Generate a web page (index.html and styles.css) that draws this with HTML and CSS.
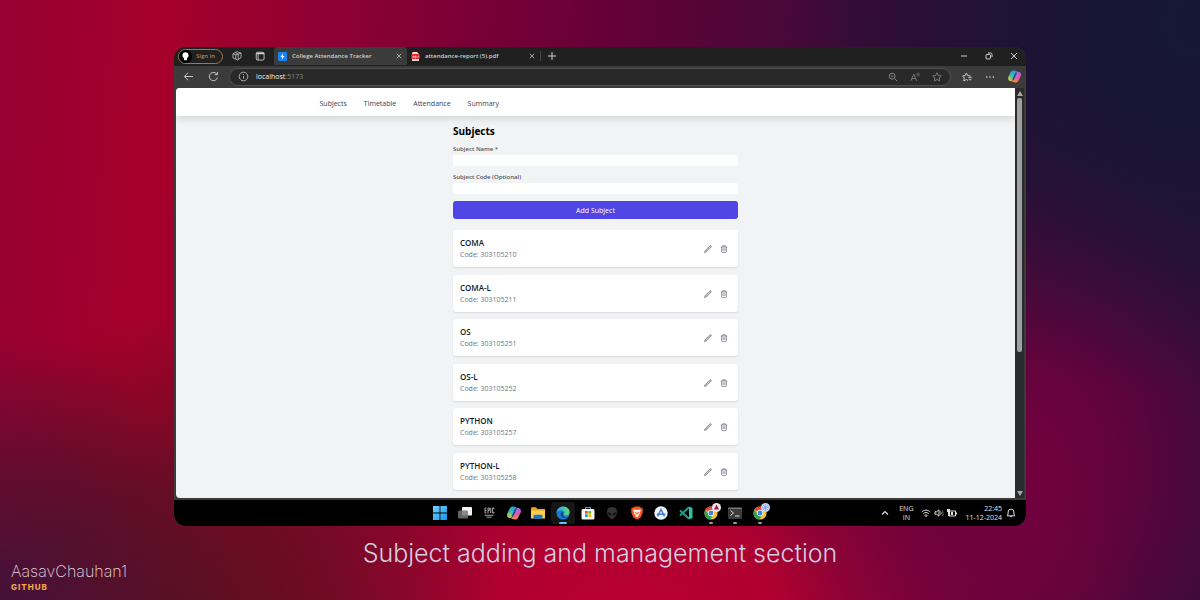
FILE: index.html
```html
<!DOCTYPE html>
<html lang="en">
<head>
<meta charset="utf-8">
<meta name="viewport" content="width=device-width, initial-scale=1">
<title>College Attendance Tracker</title>
<link rel="stylesheet" href="styles.css">
</head>
<body class="stage">
<svg class="defs" width="0" height="0" aria-hidden="true">
  <defs>
    <linearGradient id="gCopA" x1="0" y1="0" x2="0" y2="1"><stop offset="0" stop-color="#1a9fe8"/><stop offset=".5" stop-color="#3cc0a0"/><stop offset="1" stop-color="#f7c52c"/></linearGradient>
    <linearGradient id="gCopB" x1="0" y1="0" x2="0" y2="1"><stop offset="0" stop-color="#9a6cf5"/><stop offset=".5" stop-color="#e5569c"/><stop offset="1" stop-color="#f58a3c"/></linearGradient>
    <linearGradient id="gEdge" x1="0" y1="0" x2="1" y2="0"><stop offset="0" stop-color="#2aa6e8"/><stop offset="1" stop-color="#5fdc72"/></linearGradient>
    <linearGradient id="gWin" x1="0" y1="0" x2="1" y2="1"><stop offset="0" stop-color="#6fd6ff"/><stop offset="1" stop-color="#1b94ea"/></linearGradient>
    <symbol id="copilot" viewBox="0 0 16 16"><g transform="rotate(14 8 8)"><path d="M5.500 1h4L7 12.500c-.4 1.700-1.200 2.300-2.500 2.300C2 14.800.5 13 .7 10.500L1.800 5C2.300 2.300 3.300 1 5.500 1Z" fill="url(#gCopA)"/><path d="M10.500 15h-4L9 3.500c.4-1.700 1.200-2.300 2.500-2.300 2.500 0 4 1.800 3.800 4.300L14.200 11c-.5 2.700-1.500 4-3.700 4Z" fill="url(#gCopB)"/><path d="M9 3 7 12.500" stroke="#124fa8" stroke-width="2"/></g></symbol>
    <symbol id="chrome" viewBox="0 0 16 16"><circle cx="8" cy="8" r="7.500" fill="#f7c52c"/><path d="M8 8 1.500 4.300A7.500 7.500 0 0 1 14.500 4.300L14.500 5H8Z" fill="#e24437"/><path d="M1.500 4.300A7.500 7.500 0 0 0 7.600 15.500L10.500 9.500 8 8 5.200 9.300Z" fill="#2fa152"/><circle cx="8" cy="8" r="3.600" fill="#fff"/><circle cx="8" cy="8" r="2.800" fill="#3f7fe8"/></symbol>
    <symbol id="star" viewBox="0 0 16 16"><path d="m8 1.200 2.100 4.400 4.800.6-3.500 3.300.9 4.800L8 12l-4.300 2.300.9-4.800L1.100 6.200l4.800-.6Z" fill="none" stroke="currentColor" stroke-width="1.400" stroke-linejoin="round"/></symbol>
    <symbol id="pencil" viewBox="0 0 16 16"><path d="m1 15 1-3.400L12 1.600a1.200 1.200 0 0 1 1.700 0l.7.700a1.200 1.200 0 0 1 0 1.700L4.400 14Z" fill="#c3c7cd" stroke="currentColor" stroke-width="1.400" stroke-linejoin="round"/></symbol>
    <symbol id="trash" viewBox="0 0 16 16"><path d="M1.500 4h13M5.500 4V1.500h5V4M3.200 4v9.500c0 .8.500 1.300 1.200 1.300h7.200c.7 0 1.200-.5 1.200-1.300V4M6.300 6.500v5.500M9.700 6.500v5.500" fill="none" stroke="currentColor" stroke-width="1.500"/></symbol>
    <symbol id="close" viewBox="0 0 8 8"><path d="m1 1 6 6m0-6L1 7" stroke="currentColor"/></symbol>
  </defs>
</svg>

<section class="window" aria-label="Browser window">
  <header class="tabbar">
    <button class="signin"><svg viewBox="0 0 14 14"><circle cx="7" cy="7" r="7" fill="#000"/><path d="M7 2.500c2 0 3.300 1.300 3.300 3.200 0 1.500-.8 2.200-1.500 2.900L8.400 11H5.600l-.4-2.400c-.7-.7-1.500-1.400-1.500-2.900C3.700 3.800 5 2.500 7 2.500Z" fill="#fff"/></svg>Sign in</button>
    <button class="icon-btn" aria-label="Workspaces"><svg viewBox="0 0 16 16" fill="none" stroke="currentColor" stroke-width="1.200"><path d="M5 2.500 8.500 1 14.500 3.500v7L9 14.500 1.500 11V4.500ZM1.500 4.500 6 6.300v7M5 2.500l5 2.500v9M10 5l4.500-1.500M6 6.300 10 5"/></svg></button>
    <button class="icon-btn" aria-label="Tab actions"><svg viewBox="0 0 16 16" fill="none" stroke="currentColor" stroke-width="1.400"><rect x="2" y="2" width="12.500" height="12.500" rx="2"/><path d="M2 4h12.500" stroke-width="2.500"/><path d="M5 5v9.500"/></svg></button>
    <div class="tab tab-active">
      <svg class="favicon" viewBox="0 0 9 9"><rect width="9" height="9" rx="1" fill="#1583f5"/><path d="M5.200 1.200 2.400 5h1.900l-.6 2.800L6.600 4H4.700Z" fill="#fff"/></svg>
      <span class="tab-title">College Attendance Tracker</span>
      <button class="close" aria-label="Close tab"><svg><use href="#close"/></svg></button>
    </div>
    <div class="tab">
      <svg class="favicon" viewBox="0 0 9 9"><path d="M2 0h4l2 2v7H1V1Z" fill="#f4d9d9"/><rect y="2" width="9" height="5" rx="2" fill="#e3242b"/><path d="M2 6V4h1v1H2m2-1v2h1V4Zm3 2V4h1" fill="none" stroke="#fff" stroke-width=".5"/></svg>
      <span class="tab-title">attendance-report (5).pdf</span>
      <button class="close" aria-label="Close tab"><svg><use href="#close"/></svg></button>
    </div>
    <button class="new-tab" aria-label="New tab"><svg viewBox="0 0 10 10"><path d="M5 1v8M1 5h8" stroke="currentColor"/></svg></button>
    <div class="controls">
      <button aria-label="Minimize"><svg viewBox="0 0 8 8"><path d="M1 4h6" stroke="currentColor"/></svg></button>
      <button aria-label="Restore"><svg viewBox="0 0 8 8" fill="none" stroke="currentColor"><rect x="1" y="2.500" width="4.500" height="4.500" rx="1"/><path d="M3 1h2.500C6.500 1 7 1.500 7 2.500V5"/></svg></button>
      <button aria-label="Close"><svg><use href="#close"/></svg></button>
    </div>
  </header>

  <div class="toolbar">
    <button class="tool" aria-label="Back"><svg viewBox="0 0 12 12" fill="none" stroke="currentColor"><path d="M11 6H1.500M5.500 2l-4 4 4 4"/></svg></button>
    <button class="tool" aria-label="Refresh"><svg viewBox="0 0 12 12" fill="none" stroke="currentColor"><path d="M10.300 7.200A4.500 4.500 0 1 1 9.800 3.700M10.300 1v3H7.300"/></svg></button>
    <div class="address">
      <svg class="info" viewBox="0 0 12 12" fill="none" stroke="currentColor"><circle cx="6" cy="6" r="4.700"/><path d="M6 5.300v3M6 3.300v1"/></svg>
      <span class="url"><b>localhost</b>:5173</span>
      <button class="small" aria-label="Zoom"><svg viewBox="0 0 12 12" fill="none" stroke="currentColor" stroke-width="1.200"><circle cx="5" cy="5" r="3.500"/><path d="M7.700 7.700 11 11M3.500 5h3"/></svg></button>
      <button class="small" aria-label="Read aloud"><svg viewBox="0 0 12 12" fill="none" stroke="currentColor"><path d="m1 10.500 3.500-8 3.500 8M2.300 8h4.500M8 1.500c1 .7 1 2.300 0 3M9.700.7c1.400 1.300 1.400 3.400 0 4.700"/></svg></button>
      <button class="small" aria-label="Add to favorites"><svg><use href="#star"/></svg></button>
    </div>
    <div class="tools-end">
      <button class="small" aria-label="Favorites"><svg viewBox="0 0 16 16" fill="none" stroke="currentColor" stroke-width="1.500"><path d="M9.500 13.500 7 12l-4.200 2.300.9-4.700L.8 6.300l4.300-.6L7 1.500l2 4.200 5 .6M10 9h5.500M11 12.300h4"/></svg></button>
      <button class="small" aria-label="Settings"><svg viewBox="0 0 12 12" fill="currentColor"><circle cx="2" cy="6" r="1"/><circle cx="6" cy="6" r="1"/><circle cx="10" cy="6" r="1"/></svg></button>
      <button class="copilot" aria-label="Copilot"><svg><use href="#copilot"/></svg></button>
    </div>
  </div>

  <div class="viewport">
    <div class="page">
      <nav class="nav"><div class="nav-inner"><a href="#subjects">Subjects</a><a href="#timetable">Timetable</a><a href="#attendance">Attendance</a><a href="#summary">Summary</a></div></nav>
      <main class="content" id="subjects">
        <h1>Subjects</h1>
        <form class="form">
          <div class="field"><label for="name">Subject Name *</label><input id="name" type="text"></div>
          <div class="field"><label for="code">Subject Code (Optional)</label><input id="code" type="text"></div>
          <button class="add" type="button">Add Subject</button>
        </form>
        <ul class="list">
          <li class="card"><div><h2>COMA</h2><p>Code: 303105210</p></div><button aria-label="Edit COMA"><svg><use href="#pencil"/></svg></button><button aria-label="Delete COMA"><svg><use href="#trash"/></svg></button></li>
          <li class="card"><div><h2>COMA-L</h2><p>Code: 303105211</p></div><button aria-label="Edit COMA-L"><svg><use href="#pencil"/></svg></button><button aria-label="Delete COMA-L"><svg><use href="#trash"/></svg></button></li>
          <li class="card"><div><h2>OS</h2><p>Code: 303105251</p></div><button aria-label="Edit OS"><svg><use href="#pencil"/></svg></button><button aria-label="Delete OS"><svg><use href="#trash"/></svg></button></li>
          <li class="card"><div><h2>OS-L</h2><p>Code: 303105252</p></div><button aria-label="Edit OS-L"><svg><use href="#pencil"/></svg></button><button aria-label="Delete OS-L"><svg><use href="#trash"/></svg></button></li>
          <li class="card"><div><h2>PYTHON</h2><p>Code: 303105257</p></div><button aria-label="Edit PYTHON"><svg><use href="#pencil"/></svg></button><button aria-label="Delete PYTHON"><svg><use href="#trash"/></svg></button></li>
          <li class="card"><div><h2>PYTHON-L</h2><p>Code: 303105258</p></div><button aria-label="Edit PYTHON-L"><svg><use href="#pencil"/></svg></button><button aria-label="Delete PYTHON-L"><svg><use href="#trash"/></svg></button></li>
        </ul>
      </main>
    </div>
    <div class="scrollbar" aria-hidden="true">
      <svg viewBox="0 0 6 5"><path d="M3 0 6 5H0Z" fill="#a8a8a8"/></svg>
      <div class="track"><div class="thumb"></div></div>
      <svg viewBox="0 0 6 5"><path d="M3 5 6 0H0Z" fill="#a8a8a8"/></svg>
    </div>
  </div>

  <footer class="taskbar">
    <div class="apps">
      <button aria-label="Start"><svg viewBox="0 0 14 14" fill="url(#gWin)"><path d="M0 0h6.600v6.600H0ZM7.400 0H14v6.600H7.400ZM0 7.400h6.600V14H0ZM7.400 7.400H14V14H7.400Z"/></svg></button>
      <button aria-label="Task view"><svg viewBox="0 0 14 14"><rect x="4" y="1" width="10" height="8.500" rx="1" fill="#f2f2f2"/><rect y="4.500" width="10" height="8" rx="1" fill="#777" fill-opacity=".85"/></svg></button>
      <button aria-label="Epic Games"><svg viewBox="0 0 14 14" fill="none" stroke="#b5b5b5"><path d="M4.500 2H3v5h1.500M3 4.500h1.300M6 7.500V2h1.300v2.500H6M8.700 2v5M12 3.200V2h-1.600v5H12V5.800M2.500 9.300h9M4.500 11.200h5" stroke-width=".9"/></svg></button>
      <button aria-label="Copilot"><svg><use href="#copilot"/></svg></button>
      <button aria-label="File Explorer"><svg viewBox="0 0 14 14"><path d="M0 2.500C0 1.500.5 1.200 1.200 1.200h3.600L6.500 3H14v9H0Z" fill="#e9a51c"/><path d="M0 4.500h14v8H0Z" fill="#fcd04e"/><path d="M2.500 12.800V10c0-.8.400-1.200 1.200-1.200h6.600c.8 0 1.200.4 1.200 1.200v2.800Z" fill="#1878cc"/></svg></button>
      <button class="current" aria-label="Edge"><svg viewBox="0 0 16 16"><circle cx="8" cy="8" r="7.500" fill="#167bd0"/><path d="M.6 8C.8 3.800 4 .5 8 .5c4.500 0 7.500 3 7.500 6.300 0 2.500-1.700 4-4 4-1.600 0-2.600-.7-2.600-1.300 0-.5.700-.7.700-1.800 0-1.500-1.500-2.800-3.800-2.800C3.400 4.900 1.500 6.200.6 8Z" fill="url(#gEdge)"/><path d="M5.500 8.500c-.3 3.200 2.500 5.500 5.500 5.200 1.300-.1 2.500-.7 3-1.300-2.500 1.300-6.500.8-6.500-3.400 0-1 .3-1.400.7-1.900-1.400-.3-2.600.4-2.700 1.400Z" fill="#0c3f86"/></svg></button>
      <button aria-label="Store"><svg viewBox="0 0 14 14"><path d="M4.500 3.500v-2h5v2" fill="none" stroke="#4db5ee"/><rect x=".5" y="3" width="13" height="10.500" rx="1.500" fill="#f5f5f5"/><path d="M4 5h2.700v2.700H4Z" fill="#f25022"/><path d="M7.300 5H10v2.700H7.300Z" fill="#7fba00"/><path d="M4 8.300h2.700V11H4Z" fill="#00a4ef"/><path d="M7.300 8.300H10V11H7.300Z" fill="#ffb900"/></svg></button>
      <button aria-label="Alienware"><svg viewBox="0 0 14 14"><path d="M7 1c3.300 0 5 2 5 5 0 3.200-3 6.300-5 7.500C5 12.300 2 9.200 2 6c0-3 1.700-5 5-5Z" fill="#343434"/><path d="M3 6.500c2 0 3 1 3.300 3C4.500 9.500 3.300 8.500 3 6.500Zm8 0c-2 0-3 1-3.300 3 1.800 0 3-1 3.300-3Z" fill="#080808"/></svg></button>
      <button aria-label="Brave"><svg viewBox="0 0 14 14"><path d="M4.500.5h5l1.200 1.200 1.400-.1L13 4l-.5 1 .3 1.200-2 5L7 13.800l-3.800-2.600-2-5L1.500 5 1 4l.9-2.400 1.400.1Z" fill="#fb5424"/><path d="m3 4.200 2-.6 2 .4 2-.4 2 .6-1.300 2.200.2 1.600L8 9l.7 1L7 11.200 5.300 10 6 9 4.100 8l.2-1.600Z" fill="#fff"/><path d="m4.700 5.500 1.500.6L7 8l.8-1.900 1.500-.6-.8 1.700L7 9 5.500 7.200Z" fill="#fb5424"/></svg></button>
      <button aria-label="App Store"><svg viewBox="0 0 14 14"><circle cx="7" cy="7" r="6.700" fill="#f4f8fd"/><path d="m3.500 10.500 3.500-7 3.500 7M2.800 8.300h8.400" fill="none" stroke="#3b7de0" stroke-width="1.500"/></svg></button>
      <button aria-label="Code editor"><svg viewBox="0 0 14 14"><path d="m10 .5 3.500 1.500v10L10 13.500Z" fill="#2cc3a2"/><path d="M10 1.300 1 9.500M10 12.700 1 4.500" stroke="#1ca085" stroke-width="2"/></svg></button>
      <button class="running" aria-label="Chrome"><svg><use href="#chrome"/></svg><svg class="badge" viewBox="0 0 9 9"><circle cx="4.500" cy="4.500" r="4.500" fill="#f1e7ea"/><path d="M4.500 1.500 7 6.500H2Z" fill="#941c3c"/></svg></button>
      <button class="running" aria-label="Terminal"><svg viewBox="0 0 14 14"><rect y="1" width="14" height="12" rx="1" fill="#3c3c3c"/><path d="M0 2.500h14" stroke="#777"/><path d="m2.500 4.500 3 2.500-3 2.500M7 10h4.500" fill="none" stroke="#ddd"/></svg></button>
      <button class="running" aria-label="Chrome, second profile"><svg><use href="#chrome"/></svg><svg class="badge" viewBox="0 0 9 9"><circle cx="4.500" cy="4.500" r="4.500" fill="#c3d3f8"/><path d="M4.500 1v7M1 4.500h7M2 2l5 5m0-5L2 7" stroke="#7d9fee" stroke-width=".7"/></svg></button>
    </div>
    <div class="tray">
      <svg class="chev" viewBox="0 0 8 8"><path d="m1 5.500 3-3 3 3" fill="none" stroke="currentColor" stroke-width="1.200"/></svg>
      <span class="lang">ENG<br>IN</span>
      <div class="status">
        <svg viewBox="0 0 10 10" fill="none" stroke="currentColor"><path d="M.8 4c2.400-2.500 6-2.500 8.400 0M2.300 5.700c1.600-1.600 3.800-1.600 5.400 0M3.800 7.300c.8-.7 1.600-.7 2.400 0L5 8.700Z"/></svg>
        <svg viewBox="0 0 10 10" fill="none" stroke="currentColor"><path d="M1 3.800h1.600L5 1.800v6.400L2.600 6.200H1ZM6.500 3.500c.8.800.8 2.200 0 3"/><path d="M8 2c1.500 1.500 1.500 4.500 0 6" stroke="#666"/></svg>
        <svg viewBox="0 0 10 10"><path d="M2 3h6.500v5H2ZM9.500 4.500v2" fill="none" stroke="currentColor"/><path d="M0 1h3v7H1V4H0Zm4 3h2v3H4Z" fill="currentColor"/></svg>
      </div>
      <time class="clock">22:45<br>11-12-2024</time>
      <svg class="bell" viewBox="0 0 10 10" fill="none" stroke="currentColor"><path d="M1.200 7.800h7.600L7.900 6V4a2.900 2.900 0 0 0-5.800 0v2ZM4 8.200c.3 1 1.700 1 2 0"/></svg>
    </div>
  </footer>
</section>

<footer class="footer">
  <div class="credit"><span class="author">AasavChauhan1</span><a href="#github">GITHUB</a></div>
  <p class="caption">Subject adding and management section</p>
</footer>
</body>
</html>
```
FILE: styles.css
```css
*,
*::before,
*::after {
  box-sizing: border-box;
}

h1, h2, p, ul {
  margin: 0;
  padding: 0;
}

button {
  margin: 0;
  padding: 0;
  border: 0;
  background: none;
  color: inherit;
  font: inherit;
}

a {
  color: inherit;
  text-decoration: none;
}

svg {
  display: block;
  flex: none;
}

.defs {
  position: absolute;
}

.stage {
  margin: 0;
  min-height: 100vh;
  padding-top: 47px;
  display: flex;
  flex-direction: column;
  font-family: "Open Sans", "Noto Sans", sans-serif;
  background:
    radial-gradient(ellipse 34% 62% at 100% 4%, #141833 0%, #161633dd 30%, #1a143400 100%),
    radial-gradient(ellipse 22% 55% at 85% 78%, #74003f 0%, #72003fbb 40%, #74003f00 100%),
    radial-gradient(ellipse 20% 48% at 0% 104%, #40123a 0%, #43123499 45%, #40123a00 100%),
    radial-gradient(ellipse 26% 52% at 16% 104%, #5c101f 0%, #5f0f1fbb 45%, #5c101f00 100%),
    radial-gradient(ellipse 42% 58% at 53% 103%, #b80030 0%, #b60030ee 30%, #b8003000 100%),
    linear-gradient(94deg, #960033 0%, #a6002a 13%, #8c0034 28%, #680038 48%, #3e0a38 68%, #2e0c38 84%, #2c0e38 100%);
}

.window {
  flex: 1;
  width: 71%;
  margin: 0 auto;
  display: flex;
  flex-direction: column;
  overflow: hidden;
  border-radius: 12px;
  background: #3b3b3b;
  color: #d0d0d0;
}

/* Browser chrome */

.tabbar {
  display: flex;
  align-items: center;
  height: 19px;
  padding: 0 8px 1px 4px;
  background: #202020;
  font-size: 6px;
  font-weight: 600;
}

.signin {
  display: flex;
  align-items: center;
  gap: 4px;
  width: 45px;
  height: 15px;
  border: 1px solid #a5744a;
  border-radius: 8px;
  color: #b5835a;
  font-weight: 600;
}

.signin svg {
  width: 13px;
  height: 13px;
}

.icon-btn {
  width: 23px;
  display: grid;
  place-items: center;
}

.icon-btn:nth-child(2) {
  margin-left: 2px;
}

.icon-btn svg {
  width: 10px;
  height: 10px;
}

.tab {
  display: flex;
  align-items: center;
  gap: 5px;
  width: 133px;
  height: 18px;
  padding: 0 5px 0 4px;
}

.tab-active {
  margin-left: 3px;
  background: #3b3b3b;
  border-radius: 4px 4px 0 0;
}

.favicon {
  width: 9px;
  height: 9px;
}

.tab-title {
  flex: 1;
  white-space: nowrap;
}

.close svg {
  width: 6px;
  height: 6px;
}

.new-tab {
  padding-left: 6px;
  border-left: 1px solid #444;
}

.new-tab svg {
  width: 10px;
  height: 10px;
}

.controls {
  display: flex;
  gap: 17px;
  margin-left: auto;
}

.controls svg {
  width: 8px;
  height: 8px;
}

.toolbar {
  display: flex;
  align-items: center;
  height: 22px;
  padding: 0 5px 1px 9px;
}

.tool {
  width: 25px;
}

.tool svg,
.info {
  width: 11px;
  height: 11px;
}

.address {
  flex: 1;
  display: flex;
  align-items: center;
  gap: 12px;
  height: 18px;
  margin-left: -4px;
  padding: 0 8px;
  border: 1px solid #505050;
  border-radius: 9px;
  background: #292929;
  color: #858585;
}

.info {
  margin-right: -5px;
  color: #b5b5b5;
}

.url {
  flex: 1;
  font-size: 7px;
}

.url b {
  color: #f0f0f0;
  font-weight: 500;
}

.small svg {
  width: 10px;
  height: 10px;
}

.tools-end {
  display: flex;
  align-items: center;
  gap: 13px;
  padding-left: 11px;
}

.copilot svg {
  width: 13px;
  height: 13px;
}

/* Page */

.viewport {
  flex: 1;
  display: flex;
  padding: 0 2px 2px;
}

.page {
  flex: 1;
  display: flex;
  flex-direction: column;
  overflow: hidden;
  border-radius: 4px 0 0 4px;
  background: #f2f3f5;
}

.nav {
  background: #fff;
  box-shadow: 0 2px 8px #00000026;
}

.nav-inner {
  display: flex;
  align-items: center;
  gap: 17px;
  width: 100%;
  max-width: 552px;
  height: 28px;
  margin: 0 auto;
  padding-top: 2px;
  font-size: 7px;
  color: #374151;
}

.content {
  flex: 1;
  display: flex;
  flex-direction: column;
  width: 100%;
  max-width: 285px;
  margin: 0 auto;
  padding: 8px 0;
  color: #111827;
}

.content h1 {
  font-size: 10px;
  line-height: 14px;
  color: #000;
}

.form {
  display: flex;
  flex-direction: column;
  gap: 7px;
  margin: 7px 0 11px;
}

.field {
  display: flex;
  flex-direction: column;
  gap: 1px;
}

.field label {
  font-size: 6px;
  line-height: 9px;
  font-weight: 600;
  color: #4b5563;
}

.field input {
  width: 100%;
  height: 11px;
  padding: 0 4px;
  border: 0;
  border-radius: 2px;
  background: #fff;
  font: inherit;
  font-size: 7px;
}

.add {
  height: 18px;
  border-radius: 3px;
  background: #4f46e5;
  color: #fff;
  font-size: 7px;
}

.list {
  flex: 1;
  display: flex;
  flex-direction: column;
  justify-content: space-between;
  gap: 7px;
  list-style: none;
}

.card {
  display: flex;
  align-items: center;
  gap: 8px;
  padding: 7px 10px 6px 7px;
  border-radius: 3px;
  background: #fff;
  box-shadow: 0 1px 2px #0000001a;
}

.card div {
  flex: 1;
}

.card h2 {
  font-size: 8px;
  line-height: 12px;
  font-weight: 600;
}

.card p {
  font-size: 7px;
  line-height: 12px;
  color: #70757f;
}

.card button {
  color: #6b7280;
}

.card button svg {
  width: 8px;
  height: 8px;
}

.scrollbar {
  display: flex;
  flex-direction: column;
  align-items: center;
  gap: 2px;
  width: 9px;
  padding: 3px 0 2px;
  background: #2b2b2b;
}

.scrollbar svg {
  width: 6px;
  height: 5px;
}

.track {
  flex: 1;
}

.thumb {
  width: 5px;
  height: 65%;
  border-radius: 2px;
  background: #a0a0a0;
}

/* Taskbar */

.taskbar {
  display: grid;
  grid-template-columns: 1fr 344px 1fr;
  align-items: center;
  height: 26px;
  background: #000;
  color: #e0e0e0;
}

.apps {
  grid-column: 2;
  display: flex;
  justify-content: space-between;
}

.apps button {
  position: relative;
  display: grid;
  place-items: center;
  width: 24px;
  height: 22px;
  border-radius: 3px;
}

.apps svg {
  width: 14px;
  height: 14px;
}

.apps .current {
  background: #161616;
}

.current::after,
.running::after {
  content: "";
  position: absolute;
  bottom: 0;
  left: 50%;
  width: 4px;
  height: 2px;
  margin-left: -2px;
  border-radius: 1px;
  background: #9a9a9a;
}

.current::after {
  width: 8px;
  margin-left: -4px;
  background: #5cc3f5;
}

.apps .badge {
  position: absolute;
  top: 1px;
  right: 2px;
  width: 9px;
  height: 9px;
}

.tray {
  display: flex;
  align-items: center;
  justify-content: flex-end;
  gap: 4px;
  padding-right: 10px;
  font-size: 7px;
  line-height: 9px;
}

.chev {
  width: 8px;
  height: 8px;
  margin-right: 6px;
}

.lang {
  text-align: center;
}

.status {
  display: flex;
  gap: 3px;
  padding: 0 4px;
}

.status svg {
  width: 10px;
  height: 10px;
}

.bell {
  width: 10px;
  height: 10px;
}

.clock {
  text-align: right;
  white-space: nowrap;
}

/* Caption and credit */

.footer {
  display: grid;
  grid-template-columns: 1fr auto 1fr;
  height: 74px;
  padding: 0 11px;
  font-family: Inter, "Open Sans", sans-serif;
}

.credit {
  align-self: end;
  padding-bottom: 7px;
}

.author {
  display: block;
  font-size: 16px;
  line-height: 22px;
  font-weight: 200;
  color: #e6d8de;
}

.credit a {
  display: block;
  font-size: 8px;
  line-height: 11px;
  font-weight: 800;
  letter-spacing: 1px;
  color: #f0a94a;
}

.caption {
  grid-column: 2;
  padding-top: 12px;
  font-size: 25px;
  line-height: 30px;
  font-weight: 300;
  color: #d3cfe0;
}
```
